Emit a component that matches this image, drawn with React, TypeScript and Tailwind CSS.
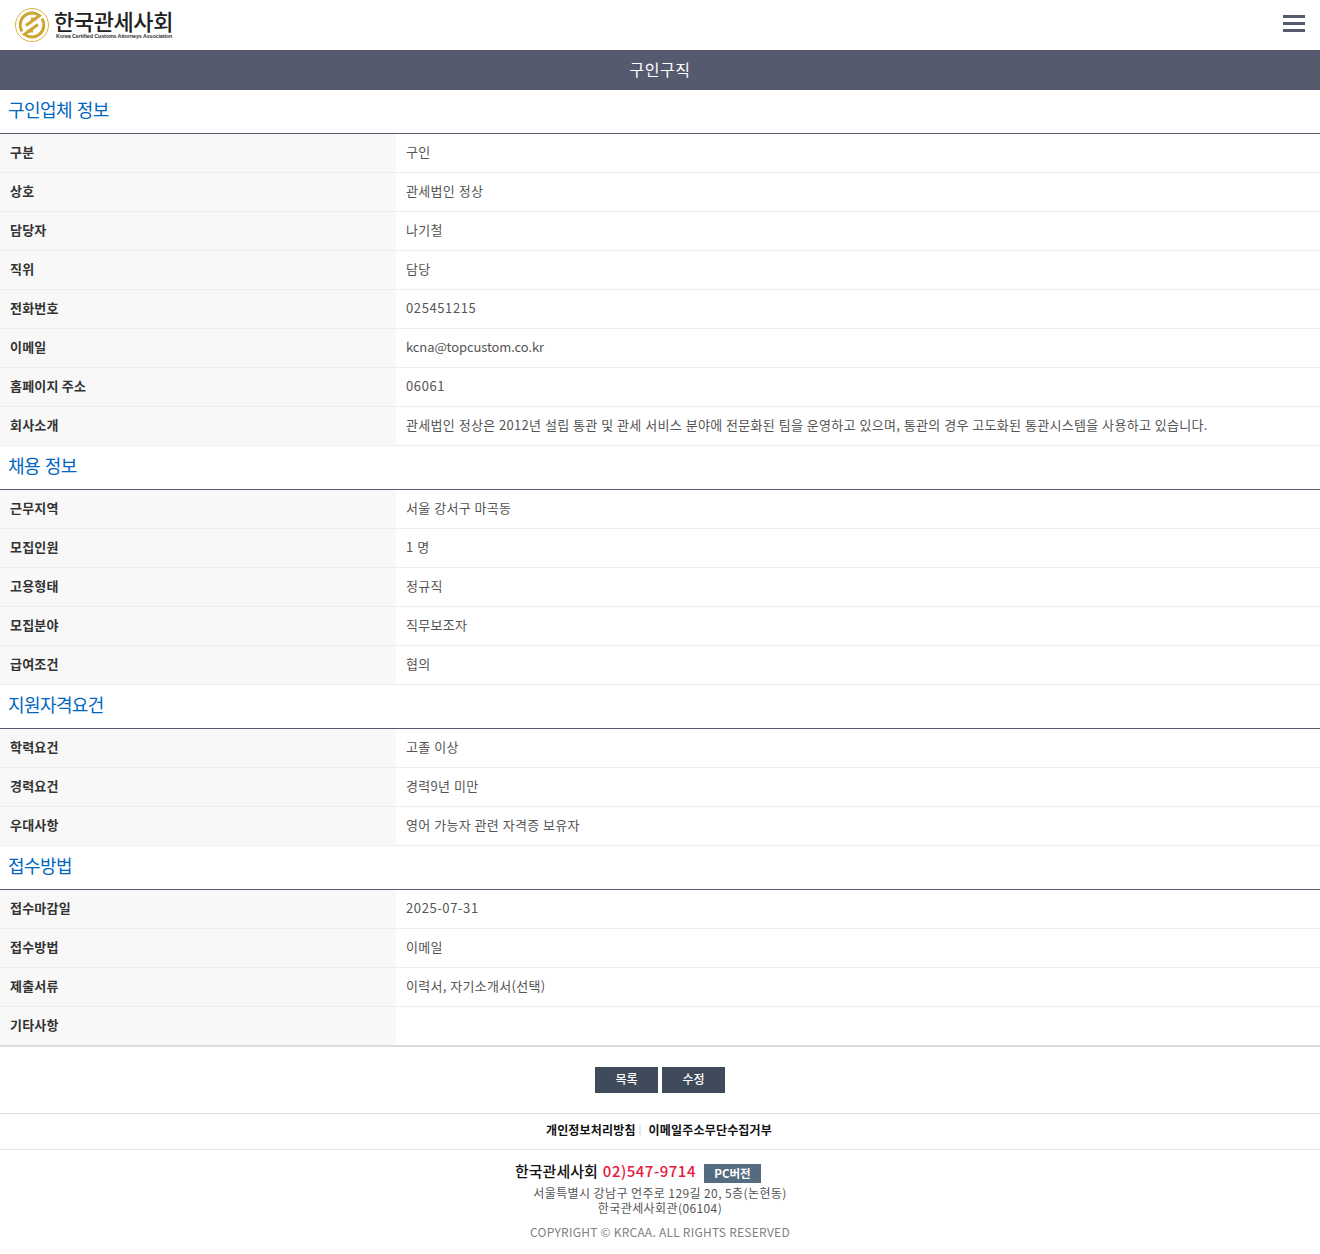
const FONT = "font-['Noto_Sans_CJK_KR','Noto_Sans',sans-serif]";

type Row = [string, string];

const sections: { title: string; rows: Row[] }[] = [
  {
    title: "구인업체 정보",
    rows: [
      ["구분", "구인"],
      ["상호", "관세법인 정상"],
      ["담당자", "나기철"],
      ["직위", "담당"],
      ["전화번호", "025451215"],
      ["이메일", "kcna@topcustom.co.kr"],
      ["홈페이지 주소", "06061"],
      ["회사소개", "관세법인 정상은 2012년 설립 통관 및 관세 서비스 분야에 전문화된 팀을 운영하고 있으며, 통관의 경우 고도화된 통관시스템을 사용하고 있습니다."],
    ],
  },
  {
    title: "채용 정보",
    rows: [
      ["근무지역", "서울 강서구 마곡동"],
      ["모집인원", "1 명"],
      ["고용형태", "정규직"],
      ["모집분야", "직무보조자"],
      ["급여조건", "협의"],
    ],
  },
  {
    title: "지원자격요건",
    rows: [
      ["학력요건", "고졸 이상"],
      ["경력요건", "경력9년 미만"],
      ["우대사항", "영어 가능자 관련 자격증 보유자"],
    ],
  },
  {
    title: "접수방법",
    rows: [
      ["접수마감일", "2025-07-31"],
      ["접수방법", "이메일"],
      ["제출서류", "이력서, 자기소개서(선택)"],
      ["기타사항", ""],
    ],
  },
];

function Logo() {
  return (
    <div className="flex items-center">
      <svg width="36" height="36" viewBox="0 0 36 36" className="ml-[14px]">
        <circle cx="18" cy="18" r="16.5" fill="none" stroke="#d8b445" strokeWidth="1" />
        <g fill="none" stroke="#cfa531" strokeWidth="3">
          <path d="M8 24.5 A12 12 0 0 1 25.5 8.6 L12 18.5" />
          <path d="M28 11.5 A12 12 0 0 1 10.5 27.4 L24 17.5" />
          <path d="M13.5 24 H19" />
          <path d="M17 12 H22.5" />
        </g>
      </svg>
      <div className="mb-[2px] ml-[4px] flex flex-col">
        <span className="text-[22px] leading-[24px] font-medium tracking-[-0.4px] text-[#222]">한국관세사회</span>
        <span className="ml-[2px] font-['Liberation_Sans',sans-serif] text-[5.4px] leading-[8px] font-bold tracking-[-0.12px] whitespace-nowrap text-[#333]">
          Korea Certified Customs Attorneys Association
        </span>
      </div>
    </div>
  );
}

function valueTracking(value: string) {
  if (/^[\d-]+$/.test(value)) return "tracking-[0.6px]";
  if (value.includes("@")) return "tracking-[-0.1px]";
  return "tracking-[0.3px] [word-spacing:0.4px]";
}

function InfoRow({ label, value, last }: { label: string; value: string; last: boolean }) {
  return (
    <div className={last ? "flex h-[40px] border-b-2 border-[#ddd]" : "flex h-[39px] border-b border-[#eee]"}>
      <div className="flex w-[396px] items-center bg-[#f8f8f8] pb-[3px] pl-[10px] text-[13px] leading-[20px] font-bold tracking-[0.2px] text-[#333]">
        {label}
      </div>
      <div className={`flex flex-1 items-center pb-[2px] pl-[10px] text-[13px] leading-[20px] text-[#555] ${valueTracking(value)}`}>
        {value}
      </div>
    </div>
  );
}

export default function App() {
  return (
    <div className={`${FONT} min-h-[1254px] bg-white`}>
      <header className="flex h-[50px] items-center justify-between pr-[15px]">
        <Logo />
        <div className="mb-[3px] flex w-[22px] flex-col gap-[4px]">
          <div className="h-[3px] bg-[#555a6e]" />
          <div className="h-[3px] bg-[#555a6e]" />
          <div className="h-[3px] bg-[#555a6e]" />
        </div>
      </header>

      <div className="flex h-[40px] items-center justify-center bg-[#555a6e] pb-[2px] text-[16px] tracking-[0.5px] text-white">
        구인구직
      </div>

      {sections.map((s, i) => (
        <section key={s.title}>
          <h2 className="flex h-[44px] items-center border-b border-[#555a6e] pb-[4px] pl-[8px] text-[18px] font-normal tracking-[-0.6px] [word-spacing:1.5px] text-[#0066bf]">
            {s.title}
          </h2>
          {s.rows.map((r, j) => (
            <InfoRow key={r[0]} label={r[0]} value={r[1]} last={i === sections.length - 1 && j === s.rows.length - 1} />
          ))}
        </section>
      ))}

      <div className="flex h-[67px] items-start justify-center gap-[4px] border-b border-[#ddd] pt-[20px]">
        <button className="h-[26px] w-[63px] bg-[#3f4b5b] pb-[2px] text-[12px] font-medium text-white">목록</button>
        <button className="h-[26px] w-[63px] bg-[#3f4b5b] pb-[2px] text-[12px] font-medium text-white">수정</button>
      </div>

      <div className="flex h-[36px] items-center justify-center border-b border-[#e5e5e5] pr-[2px] pb-[4px] text-[12px] font-bold tracking-[0.2px] text-[#111]">
        <span>개인정보처리방침</span>
        <span className="mr-[7px] ml-[3px] text-[9px] font-normal text-[#bbb]">|</span>
        <span>이메일주소무단수집거부</span>
      </div>

      <footer className="flex flex-col items-center pt-[11px] text-center">
        <div className="mr-[44px] flex items-start">
          <span className="text-[15px] leading-[20px] font-medium text-[#111]">한국관세사회</span>
          <span className="ml-[5px] text-[15px] leading-[20px] font-medium tracking-[0.5px] text-[#e8173d]">02)547-9714</span>
          <span className="mt-[3px] ml-[8px] flex h-[19px] w-[57px] items-center justify-center bg-[#546b80] text-[11.5px] font-bold text-white">
            PC버전
          </span>
        </div>
        <div className="mt-[2px] text-[12px] leading-[15px] tracking-[0.4px] text-[#555]">
          서울특별시 강남구 언주로 129길 20, 5층(논현동)
          <br />
          한국관세사회관(06104)
        </div>
        <div className="mt-[9px] text-[12px] leading-[16px] tracking-[0.24px] text-[#808080]">
          COPYRIGHT © KRCAA. ALL RIGHTS RESERVED
        </div>
      </footer>
    </div>
  );
}
